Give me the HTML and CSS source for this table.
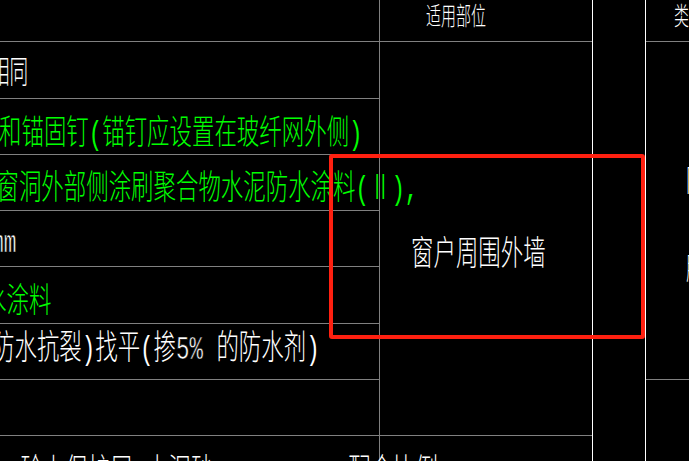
FILE: index.html
```html
<!DOCTYPE html>
<html lang="zh">
<head>
<meta charset="utf-8">
<title>CAD 表格</title>
<link rel="stylesheet" href="styles.css">
</head>
<body>
<div class="sheet">
  <div class="col col-a">
    <div class="cell head"></div>
    <div class="cell r1"><span class="cad w s1">相同</span></div>
    <div class="cell r2"><span class="cad g">和锚固钉(锚钉应设置在玻纤网外侧)</span></div>
    <div class="cell r3"><span class="cad g">门窗洞外部侧涂刷聚合物水泥防水涂料(Ⅱ),</span></div>
    <div class="cell r4"><span class="cad w s4">mm</span></div>
    <div class="cell r5"><span class="cad g">水涂料</span></div>
    <div class="cell r6"><span class="cad w">防水抗裂)找平(掺<span class="thin">5%</span> 的防水剂)</span></div>
    <div class="cell r7"></div>
    <div class="cell r8 last"><span class="cad w">、砼上保护层 水泥砂  &nbsp; &nbsp; &nbsp; &nbsp; 配合比例</span></div>
  </div>
  <div class="col col-b">
    <div class="cell head"><span class="cad w sh">适用部位</span></div>
    <div class="cell body-b"><span class="cad w">窗户周围外墙</span></div>
    <div class="cell last"></div>
  </div>
  <div class="col col-c"></div>
  <div class="col col-d">
    <div class="cell head"><span class="cad w sh">类</span></div>
    <div class="cell body-d">
      <span class="cad w sd">防</span>
      <span class="cad w sd">腻</span>
    </div>
    <div class="cell last"></div>
  </div>
  <div class="mark"></div>
</div>
</body>
</html>
```

FILE: styles.css
```css
html, body {
  margin: 0;
  padding: 0;
  background: #000;
  overflow: hidden;
}

.sheet {
  position: relative;
  display: flex;
  width: 689px;
  height: 461px;
  overflow: hidden;
  background: #000;
}

.col {
  display: flex;
  flex-direction: column;
  flex: none;
}

.col-a {
  width: 379px;
  border-right: 1px solid #808080;
}

.col-b {
  width: 212px;
  border-right: 1px solid #ffffff;
}

.col-c {
  width: 52px;
  border-right: 1px solid #ffffff;
}

.col-d {
  flex: 1;
}

.cell {
  flex: none;
  box-sizing: border-box;
  border-bottom: 1px solid #808080;
  white-space: nowrap;
}

.cell.last {
  flex: 1;
  border-bottom: 0;
}

.head { height: 42px; }

.col-a .r1 { height: 57px; padding-top: 17px; }
.col-a .r2 { height: 56px; padding-top: 19px; }
.col-a .r3 { height: 56px; padding-top: 18px; }
.col-a .r4 { height: 56px; padding-top: 17px; }
.col-a .r5 { height: 57px; padding-top: 19px; }
.col-a .r6 { height: 56px; padding-top: 9px; }
.col-a .r7 { height: 56px; }
.col-a .r8 { padding-top: 21px; }

.r1 .cad { margin-left: -9px; }
.r2 .cad { margin-left: -1px; }
.r3 .cad { margin-left: -26px; }
.r4 .cad { margin-left: -9px; }
.r5 .cad { margin-left: -16px; }
.r6 .cad { margin-left: -8px; }
.r8 .cad { margin-left: -2px; }

.col-b .head { padding: 6px 0 0 46px; }
.body-b {
  height: 394px;
  padding: 197px 0 0 31px;
}

.col-d .head { padding: 6px 0 0 28px; }
.body-d {
  height: 338px;
  padding: 126px 0 0 40px;
  display: flex;
  flex-direction: column;
  gap: 58px;
}

.cad {
  display: inline-block;
  font-family: "Liberation Mono", "Noto Sans CJK SC", monospace;
  font-weight: 300;
  font-size: 34px;
  line-height: 34px;
  transform: scaleX(0.66);
  transform-origin: 0 0;
  white-space: pre;
}

.cad.g { color: #00ff00; }
.cad.w { color: #ffffff; }

.cad .thin,
.cad.s4 {
  -webkit-text-stroke: 0.6px #000;
}

.cad.s1 {
  font-size: 32px;
  line-height: 32px;
  transform: scaleX(0.58);
}

.cad.s4 {
  font-size: 32px;
  line-height: 32px;
}

.cad.sh {
  font-size: 25px;
  line-height: 25px;
  transform: scaleX(0.6);
}

.cad.sd {
  font-size: 30px;
  line-height: 30px;
}

.mark {
  position: absolute;
  left: 329px;
  top: 154px;
  width: 316px;
  height: 185px;
  box-sizing: border-box;
  border: 4px solid #ff2010;
  border-radius: 3px;
}
```
